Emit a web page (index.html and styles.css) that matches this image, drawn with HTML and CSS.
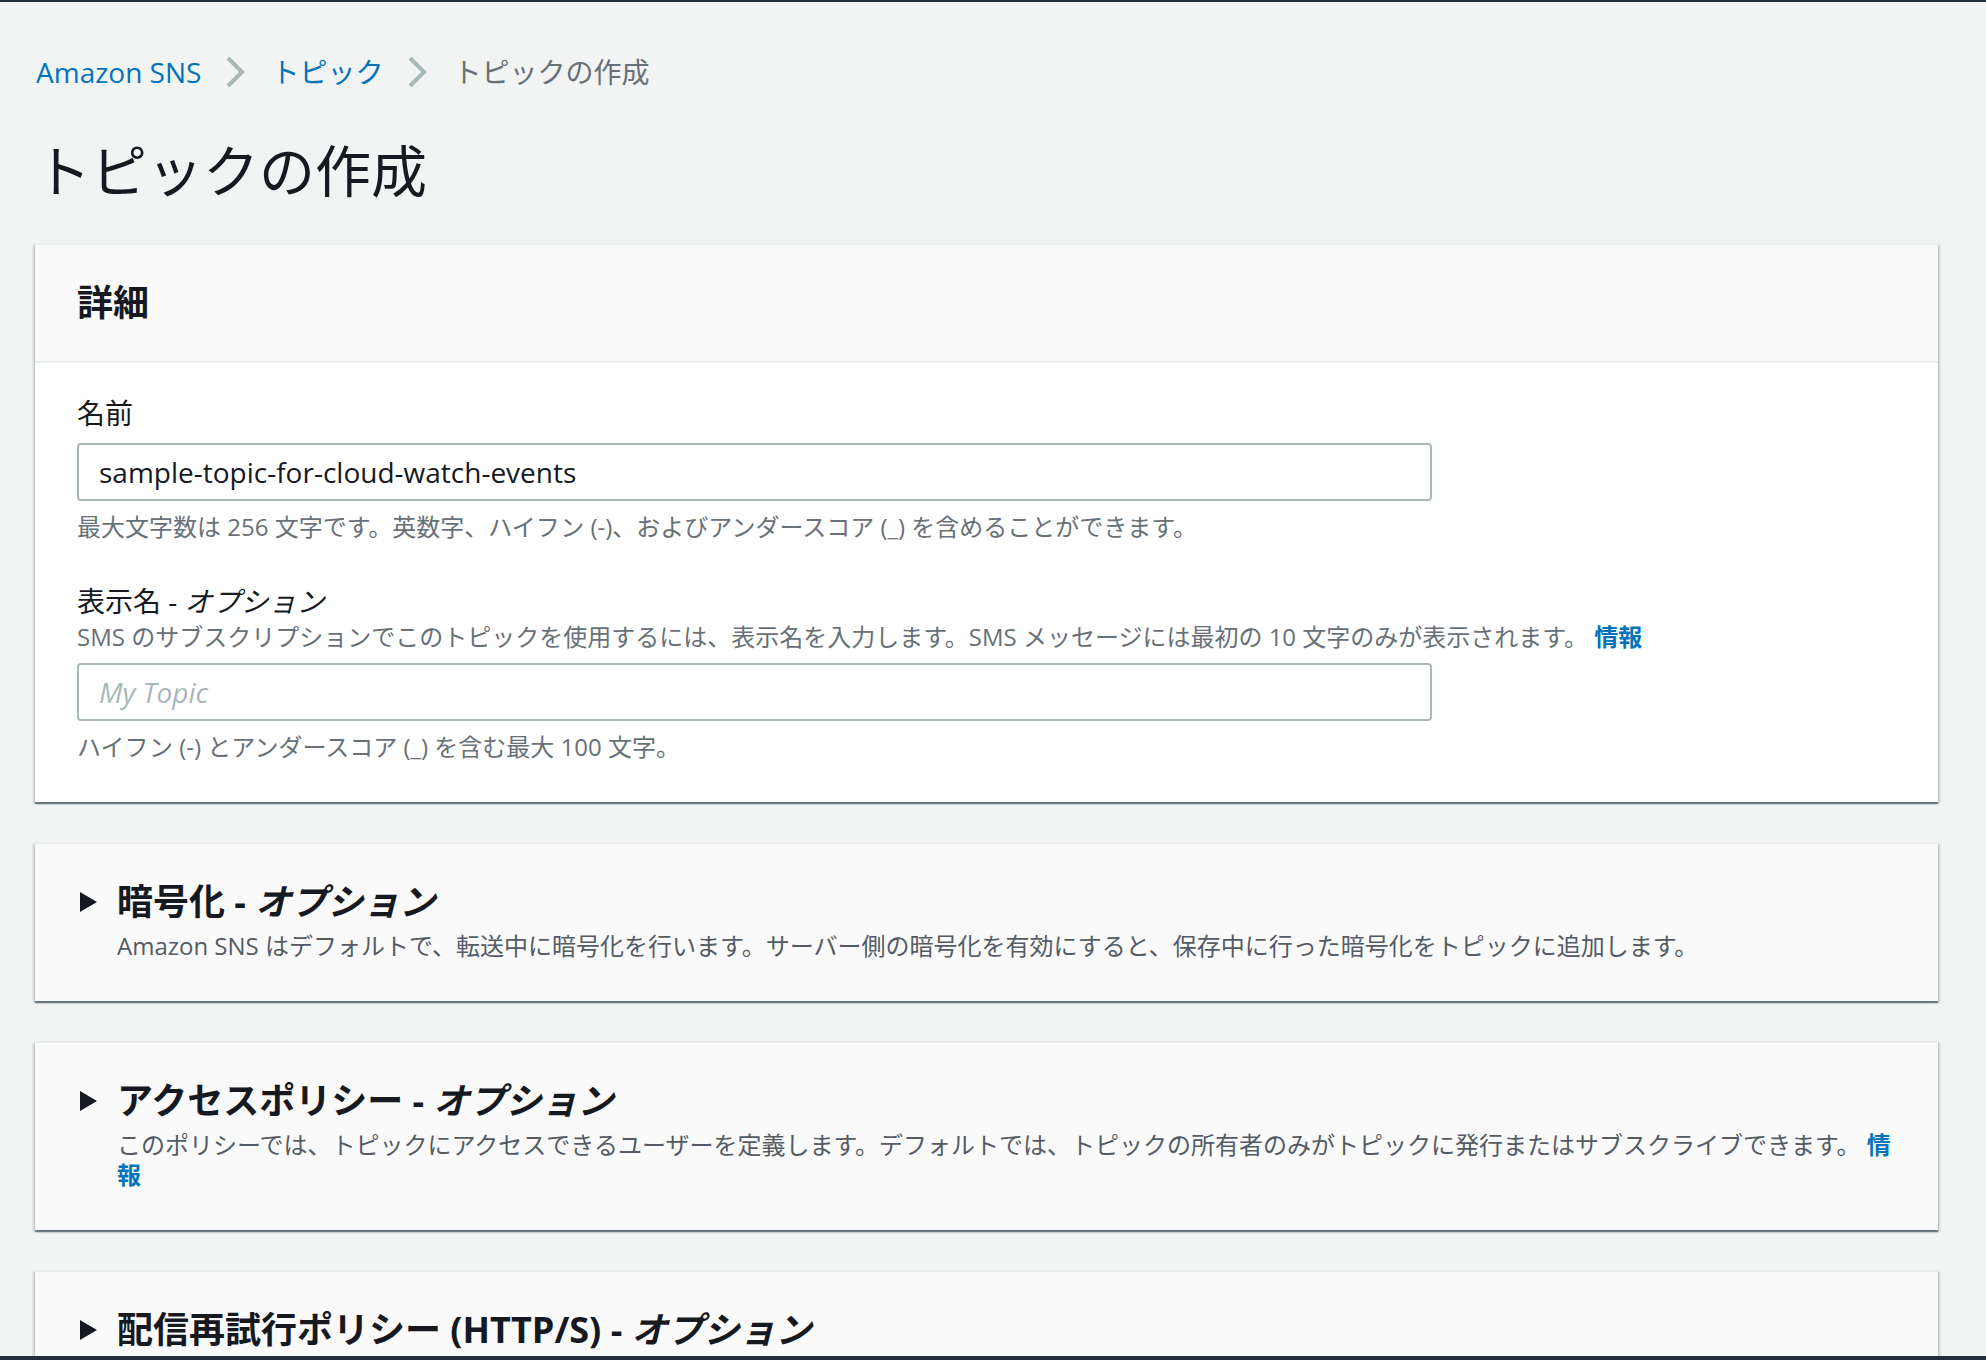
FILE: index.html
```html
<!DOCTYPE html>
<html lang="ja">
<head>
<meta charset="utf-8">
<title>トピックの作成</title>
<link rel="stylesheet" href="styles.css">
</head>
<body>
<div class="topbar"></div>
<main class="page">
  <nav class="breadcrumbs">
    <a class="crumb-link" href="#">Amazon SNS</a>
    <svg class="crumb-sep" viewBox="0 0 16 16"><path d="M5 1 L12 8 L5 15"/></svg>
    <a class="crumb-link" href="#">トピック</a>
    <svg class="crumb-sep" viewBox="0 0 16 16"><path d="M5 1 L12 8 L5 15"/></svg>
    <span class="crumb-current">トピックの作成</span>
  </nav>

  <h1 class="page-title">トピックの作成</h1>

  <section class="panel">
    <header class="panel-header">
      <h2 class="panel-title">詳細</h2>
    </header>
    <div class="panel-body">
      <div class="field">
        <label class="field-label" for="name">名前</label>
        <input class="text-input" id="name" type="text" value="sample-topic-for-cloud-watch-events">
        <p class="field-hint">最大文字数は 256 文字です。英数字、ハイフン (-)、およびアンダースコア (_) を含めることができます。</p>
      </div>
      <div class="field">
        <label class="field-label" for="display">表示名 - <i>オプション</i></label>
        <p class="field-desc">SMS のサブスクリプションでこのトピックを使用するには、表示名を入力します。SMS メッセージには最初の 10 文字のみが表示されます。 <a class="info-link" href="#">情報</a></p>
        <input class="text-input input-gap" id="display" type="text" placeholder="My Topic">
        <p class="field-hint">ハイフン (-) とアンダースコア (_) を含む最大 100 文字。</p>
      </div>
    </div>
  </section>

  <section class="panel expandable">
    <div class="exp-head">
      <svg class="caret" viewBox="0 0 32 32"><polygon points="3,6 20,16 3,26"/></svg>
      <h2 class="exp-title">暗号化 - <i>オプション</i></h2>
    </div>
    <p class="exp-desc">Amazon SNS はデフォルトで、転送中に暗号化を行います。サーバー側の暗号化を有効にすると、保存中に行った暗号化をトピックに追加します。</p>
  </section>

  <section class="panel expandable">
    <div class="exp-head">
      <svg class="caret" viewBox="0 0 32 32"><polygon points="3,6 20,16 3,26"/></svg>
      <h2 class="exp-title">アクセスポリシー - <i>オプション</i></h2>
    </div>
    <p class="exp-desc">このポリシーでは、トピックにアクセスできるユーザーを定義します。デフォルトでは、トピックの所有者のみがトピックに発行またはサブスクライブできます。 <a class="info-link" href="#">情報</a></p>
  </section>

  <section class="panel expandable">
    <div class="exp-head">
      <svg class="caret" viewBox="0 0 32 32"><polygon points="3,6 20,16 3,26"/></svg>
      <h2 class="exp-title">配信再試行ポリシー (HTTP/S) - <i>オプション</i></h2>
    </div>
  </section>
</main>
<div class="window-edge"></div>
</body>
</html>
```

FILE: styles.css
```css
* {
  box-sizing: border-box;
}

html, body {
  margin: 0;
  padding: 0;
}

body {
  background: #f2f3f3;
  color: #16191f;
  font-family: "Open Sans", "Noto Sans CJK JP", sans-serif;
  font-size: 28px;
  line-height: 40px;
}

.topbar {
  height: 2px;
  background: #232f3e;
}

.page {
  padding: 0 48px 0 35px;
}

/* Breadcrumbs */
.breadcrumbs {
  display: flex;
  align-items: center;
  margin-top: 50px;
  height: 40px;
  padding-left: 1px;
  font-size: 28px;
  line-height: 40px;
}

.crumb-link {
  color: #0073bb;
  text-decoration: none;
}

.crumb-current {
  color: #687078;
}

.crumb-sep {
  width: 32px;
  height: 32px;
  margin: 0 21px 0 17px;
  fill: none;
  stroke: #aab7b8;
  stroke-width: 2;
  flex: none;
}

/* Title */
.page-title {
  margin: 43px 0 0;
  font-size: 56px;
  line-height: 70px;
  font-weight: 400;
  color: #16191f;
}

/* Panels */
.panel {
  margin-top: 38px;
  background: #ffffff;
  border-top: 2px solid #eaeded;
  box-shadow: 0 2px 1px 0 rgba(0, 28, 36, 0.45),
              2px 2px 2px 0 rgba(0, 28, 36, 0.15),
              -2px 2px 2px 0 rgba(0, 28, 36, 0.15);
}

.panel + .panel {
  margin-top: 40px;
}

.panel-header {
  background: #fafafa;
  border-bottom: 2px solid #eaeded;
  padding: 36px 40px 36px 42px;
}

.panel-title {
  margin: 0;
  font-size: 36px;
  line-height: 44px;
  font-weight: 700;
  color: #16191f;
}

.panel-body {
  padding: 30px 40px 40px 42px;
}

.field + .field {
  margin-top: 39px;
}

.field-label {
  display: block;
  font-size: 28px;
  line-height: 40px;
  color: #16191f;
}

.field-label i,
.exp-title i {
  font-style: italic;
}

.text-input {
  display: block;
  width: 100%;
  max-width: 1355px;
  height: 58px;
  margin-top: 10px;
  padding: 0 20px;
  border: 2px solid #aab7b8;
  border-radius: 4px;
  background: #ffffff;
  font-family: "Open Sans", "Noto Sans CJK JP", sans-serif;
  font-size: 28px;
  color: #16191f;
  outline: none;
}

.input-gap {
  margin-top: 11px;
}

.text-input::placeholder {
  color: #aab7b8;
  font-style: italic;
}

.field-hint {
  margin: 11px 0 0;
  font-size: 24px;
  line-height: 30px;
  color: #687078;
}

.field-desc {
  margin: 1px 0 0;
  font-size: 24px;
  line-height: 30px;
  color: #687078;
}

.info-link {
  color: #0073bb;
  font-weight: 700;
  text-decoration: none;
}

/* Expandable (collapsed) sections */
.expandable {
  background: #fafafa;
  padding: 36px 40px 40px 42px;
}

.exp-head {
  display: flex;
  align-items: center;
  gap: 8px;
}

.caret {
  width: 32px;
  height: 32px;
  flex: none;
  fill: #16191f;
}

.exp-title {
  margin: 0;
  font-size: 36px;
  line-height: 44px;
  font-weight: 700;
  color: #16191f;
}

.exp-desc {
  margin: 7px 0 0 40px;
  font-size: 24px;
  line-height: 30px;
  color: #545b64;
}

.window-edge {
  position: fixed;
  left: 0;
  right: 0;
  bottom: 0;
  height: 4px;
  background: #232f3e;
}
```
